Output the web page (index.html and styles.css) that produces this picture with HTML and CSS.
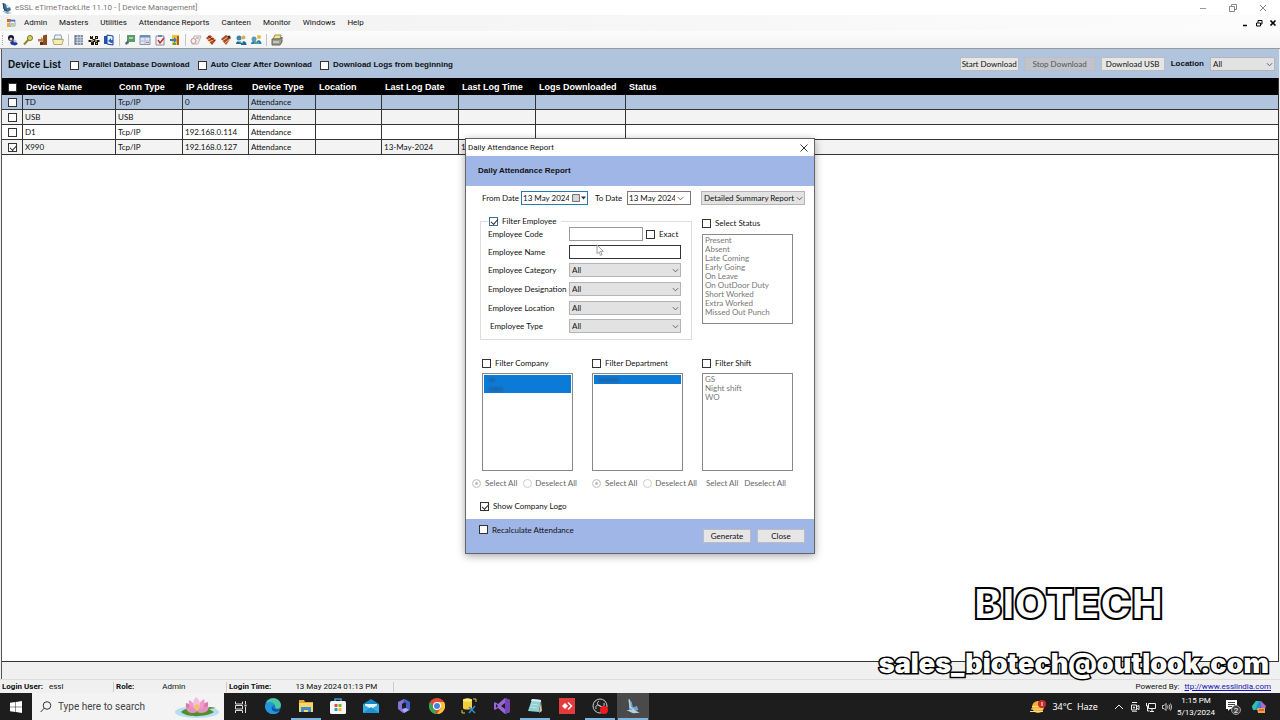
FILE: index.html
```html
<!DOCTYPE html>
<html lang="en">
<head>
<meta charset="utf-8">
<title>eSSL eTimeTrackLite 11.10 - [ Device Management]</title>
<link rel="stylesheet" href="styles.css">
</head>
<body>
<svg class="defs" aria-hidden="true">
  <symbol id="chev" viewBox="0 0 8 5"><path d="M1 1l3 3 3-3" fill="none" stroke="#555" stroke-width="1"/></symbol>
  <symbol id="essl" viewBox="0 0 12 12"><path d="M2 1l3 1 1 4 3-1 1 3-3 2-4-1z" fill="#3e7395"/><path d="M2 1l1 6 3 2" fill="none" stroke="#193b59"/><path d="M1 9l6 1 4 1-5 1z" fill="#8fa9bb"/><path d="M6 3l2 3" stroke="#9fcae5"/></symbol>
</svg>
<div class="app">
  <header class="titlebar">
    <svg class="ic12"><use href="#essl"/></svg>
    <span class="title">eSSL eTimeTrackLite 11.10 - [ Device Management]</span>
    <div class="wincontrols">
      <button aria-label="Minimize"><svg viewBox="0 0 8 8"><path d="M1 4.500h6" stroke="#999"/></svg></button>
      <button aria-label="Restore"><svg viewBox="0 0 8 8"><path d="M.5 2.500h5v5h-5zM2.500 2.500v-2h5v5h-2" fill="none" stroke="#888"/></svg></button>
      <button aria-label="Close"><svg viewBox="0 0 8 8"><path d="M1 1l6 6M7 1L1 7" stroke="#888"/></svg></button>
    </div>
  </header>
  <nav class="menubar">
    <svg class="formicon" viewBox="0 0 10 10"><path d="M1 5h4v4H1z" fill="#e2b33c"/><path d="M1 1h4v3H1z" fill="#d95c2b"/><path d="M4 2h5v6H4z" fill="#fff" stroke="#89a5cc"/><path d="M4 2h5v1.500H4z" fill="#3c6fc4"/><path d="M5 5h3v2H5z" fill="#e8be50"/></svg>
    <button>Admin</button><button>Masters</button><button>Utilities</button><button>Attendance Reports</button><button>Canteen</button><button>Monitor</button><button>Windows</button><button>Help</button>
    <div class="mdi">
      <button aria-label="Minimize child"><svg viewBox="0 0 8 8"><path d="M2 6.500h4" stroke="#000" stroke-width="1.500"/></svg></button>
      <button aria-label="Restore child"><svg viewBox="0 0 8 8"><path d="M1.500 4h4v3h-4zM3 3.500v-2h4v3.500h-1.500" fill="none" stroke="#000"/></svg></button>
      <button aria-label="Close child"><svg viewBox="0 0 8 8"><path d="M1.500 1.500l5 5M6.500 1.500l-5 5" stroke="#000" stroke-width="1.600"/></svg></button>
    </div>
  </nav>
  <div class="toolbar">
    <span class="grip"></span>
    <button aria-label="Users"><svg viewBox="0 0 12 12"><circle cx="4" cy="4" r="3" fill="#171733"/><circle cx="4" cy="5" r="1.500" fill="#e6d2bb"/><path d="M3 8l4-2 4 4-3 1.500-4-1z" fill="#24359c"/><circle cx="8" cy="7" r="1.500" fill="#b9c6e8"/></svg></button>
    <button aria-label="Key"><svg viewBox="0 0 12 12"><path d="M7 5L2 10.500" stroke="#8b8a20" stroke-width="2"/><circle cx="8" cy="4" r="2.500" fill="#d9d46a" stroke="#77761b"/></svg></button>
    <button aria-label="Exit"><svg viewBox="0 0 12 12"><path d="M6 1.500l4-1v10.500H6z" fill="#8d4a20"/><path d="M1 5h3V3l3 3-3 3V7.500H1z" fill="#bd7a42"/><path d="M3 8h3v3H3z" fill="#633014"/></svg></button>
    <button aria-label="Open"><svg viewBox="0 0 12 12"><path d="M2 5l1-4h6l1 4z" fill="#eef3f8" stroke="#87a0b9"/><path d="M.5 5.500h11L10 10.500H2z" fill="#f6edb0" stroke="#b1a973"/></svg></button>
    <span class="sep"></span>
    <button aria-label="Devices"><svg viewBox="0 0 12 12"><path d="M2 1h8v10H2z" fill="#8193a8"/><path d="M2 3.500h8M2 6h8M2 8.500h8" stroke="#e8eff5" stroke-width=".7"/><path d="M4.500 1v10M7.500 1v10" stroke="#c3cfda" stroke-width=".7"/><path d="M2 1v10" stroke="#53687e"/></svg></button>
    <button aria-label="Departments"><svg viewBox="0 0 12 12"><path d="M2 2h3v3H2zM7 2h3v3H7zM4.500 5h3v3h-3zM.5 6h3v2h-3zM8.500 6h3v2h-3zM3 8h3v3H3zM7 8h3v3H7z" fill="#1c1a0c"/><path d="M3 2h1v1H3zM8 3h1v1H8zM5 6h1v1H5zM8 9h1v1H8z" fill="#dcc52c"/></svg></button>
    <button aria-label="Import"><svg viewBox="0 0 12 12"><path d="M1 2h4v8H1z" fill="#2354a8"/><path d="M4 1l6 1v9l-6-1z" fill="#e8f1fb" stroke="#1a3e9b"/><path d="M5 7l3-3v2h2v3H8" fill="#2863c6"/></svg></button>
    <span class="sep"></span>
    <button aria-label="Chart"><svg viewBox="0 0 12 12"><path d="M3 1h8v7H3z" fill="#5c9a6c"/><path d="M5 3h4v2H5z" fill="#a5d3a7"/><path d="M1 9l3-3 1 3-3 2z" fill="#55676d"/></svg></button>
    <button aria-label="Table"><svg viewBox="0 0 12 12"><path d="M1 1.500h10v9H1z" fill="#dce6f5" stroke="#8395b2"/><path d="M1 1.500h10v2H1z" fill="#6b8abf"/><path d="M1 7h10M6 4v6" stroke="#b0bed1"/><path d="M7 8h3v1H7z" fill="#d57b6b"/></svg></button>
    <button aria-label="Tasks"><svg viewBox="0 0 12 12"><path d="M2 2h8v9H2z" fill="#f4f4f8" stroke="#8a8da0"/><path d="M4 1h4v2H4z" fill="#7584a0"/><path d="M4 6l2 3 4-5" fill="none" stroke="#c0302c" stroke-width="1.500"/></svg></button>
    <button aria-label="Export"><svg viewBox="0 0 12 12"><path d="M3 1h7v10H3z" fill="#f3c32f"/><path d="M1 5h4V3l3 3-3 3V7H1z" fill="#3879bd"/><path d="M8 2h2v9H8z" fill="#b85b20"/><path d="M4 9h3v2H4z" fill="#56a04d"/></svg></button>
    <span class="sep"></span>
    <button aria-label="Log"><svg viewBox="0 0 12 12"><path d="M4 2h7L8 10H2z" fill="#ecebee" stroke="#b9b7c0"/><circle cx="3.500" cy="7" r="2.500" fill="#f7f2f2" stroke="#c98a88"/><path d="M6 4h3" stroke="#d68989"/></svg></button>
    <button aria-label="Report"><svg viewBox="0 0 12 12"><path d="M1 4l4-3 6 5-4 5z" fill="#b3412b"/><path d="M2 6l6-3M4 8l6-3" stroke="#f3cf72"/><path d="M3 2l7 5" stroke="#722113"/></svg></button>
    <button aria-label="Edit report"><svg viewBox="0 0 12 12"><path d="M1 5l5-4 5 3-5 7z" fill="#a9472c"/><path d="M2 7l6-4M5 9l5-4" stroke="#efc76c"/><circle cx="9" cy="3" r="1.500" fill="#473027"/></svg></button>
    <button aria-label="Sync users"><svg viewBox="0 0 12 12"><circle cx="4" cy="4" r="2.500" fill="#3b83b0"/><circle cx="8.500" cy="3.500" r="2" fill="#d6b34d"/><path d="M1 10c0-4 6-4 6 0zM6 11c0-5 5.500-5 5.500 0z" fill="#1b6893"/><path d="M3 7l5 2" stroke="#a0d1dc"/></svg></button>
    <button aria-label="Sync groups"><svg viewBox="0 0 12 12"><circle cx="4" cy="5" r="2.500" fill="#5c9ab6"/><circle cx="9" cy="3" r="2" fill="#e5bb3f"/><path d="M1 10c0-4 6-4 6 0zM6 10c0-5 5.500-5 5.500 0z" fill="#2a7fae"/><path d="M4 9h5" stroke="#7ac277"/></svg></button>
    <span class="sep"></span>
    <button aria-label="Print"><svg viewBox="0 0 12 12"><path d="M4 1h6l-1 4H2z" fill="#f4e58f" stroke="#a08e55"/><path d="M1 5h8l2-2v5l-2 3H1z" fill="#9a9a92" stroke="#65655f"/><path d="M2 8h6" stroke="#eee"/></svg></button>
  </div>

  <main class="client">
    <form class="devicebar">
      <h1>Device List</h1>
      <label><input type="checkbox">Parallel Database Download</label>
      <label><input type="checkbox">Auto Clear After Download</label>
      <label><input type="checkbox">Download Logs from beginning</label>
      <div class="deviceactions">
        <button type="button" class="btn start">Start Download</button>
        <button type="button" class="btn stop" disabled>Stop Download</button>
        <button type="button" class="btn usb">Download USB</button>
        <label class="loc" for="loc">Location</label>
        <span class="combo locbox"><select id="loc"><option>All</option></select><svg><use href="#chev"/></svg></span>
      </div>
    </form>
    <div class="gridwrap">
      <table class="devices">
        <colgroup><col class="c1"><col class="c2"><col class="c3"><col class="c4"><col class="c3"><col class="c4"><col class="c7"><col class="c7"><col class="c9"><col></colgroup>
        <thead><tr><th><input type="checkbox" aria-label="Select all devices"></th><th>Device Name</th><th>Conn Type</th><th>IP Address</th><th>Device Type</th><th>Location</th><th>Last Log Date</th><th>Last Log Time</th><th>Logs Downloaded</th><th>Status</th></tr></thead>
        <tbody>
          <tr class="current"><td><input type="checkbox" aria-label="TD"></td><td>TD</td><td>Tcp/IP</td><td>0</td><td>Attendance</td><td></td><td></td><td></td><td></td><td></td></tr>
          <tr class="alt"><td><input type="checkbox" aria-label="USB"></td><td>USB</td><td>USB</td><td></td><td>Attendance</td><td></td><td></td><td></td><td></td><td></td></tr>
          <tr><td><input type="checkbox" aria-label="D1"></td><td>D1</td><td>Tcp/IP</td><td>192.168.0.114</td><td>Attendance</td><td></td><td></td><td></td><td></td><td></td></tr>
          <tr class="alt"><td><input type="checkbox" aria-label="X990" checked></td><td>X990</td><td>Tcp/IP</td><td>192.168.0.127</td><td>Attendance</td><td></td><td>13-May-2024</td><td>1</td><td></td><td></td></tr>
        </tbody>
      </table>
    </div>
  </main>

  <footer class="status">
    <div class="s1"><b>Login User:</b><span>essl</span></div>
    <div class="s2"><b>Role:</b><span>Admin</span></div>
    <div class="s3"><b>Login Time:</b><span>13 May 2024 01:13 PM</span></div>
    <div class="powered"><span>Powered By:</span><a href="#">ttp://www.esslindia.com</a></div>
  </footer>

  <div class="taskbar">
    <button class="startbtn" aria-label="Start"><svg viewBox="0 0 12 12"><path d="M0 1.700L5.500 1v4.700H0zM6 .9L12 0v5.700H6zM0 6.200h5.500V11L0 10.300zM6 6.200h6V12l-6-.9z" fill="#fff"/></svg></button>
    <label class="search">
      <svg class="mag" viewBox="0 0 12 12"><circle cx="7" cy="4.500" r="3.800" fill="none" stroke="#333"/><path d="M4.200 7.200L.7 11" stroke="#333"/></svg>
      <input type="text" placeholder="Type here to search" aria-label="Search">
      <svg class="lotus" viewBox="0 0 46 22"><ellipse cx="23" cy="16" rx="22" ry="6" fill="#b8dcf0"/><path d="M7 16c5-5 10-3 15-3 7-2 14-3 20-1l-7 1 5 3c-7 5-27 6-33 0z" fill="#4f8f2c"/><path d="M12 7c5 1 8 4 9 9-7 1-10-3-9-9zM34 6c-5 1-9 4-10 9 7 2 11-2 10-9z" fill="#db78b0"/><path d="M15 4c4 2 7 6 8 11-6-1-9-5-8-11zM30 3c-4 2-6 7-7 12 6-1 9-6 7-12z" fill="#ed9bc8"/><path d="M22 1c5 4 5 9 1 14-5-4-5-10-1-14z" fill="#f6bddb"/><path d="M12 12c5-2 9 0 11 4-5 2-10 1-11-4zM35 11c-5-1-9 1-12 5 5 2 11 1 12-5z" fill="#e891bf"/><circle cx="23" cy="11" r="2.500" fill="#f1c35a"/></svg>
    </label>
    <button class="taskview" aria-label="Task view"><svg viewBox="0 0 12 12"><path d="M.5.5v2.500h7V.5M.5 4.500h7v3.500h-7zM.5 12V9.500h7V12M10.500 0v3M10.500 6v6" fill="none" stroke="#ddd"/><path d="M9.500 3.500h2v2h-2z" fill="#ddd"/></svg></button>
    <div class="apps">
      <button aria-label="Edge"><svg viewBox="0 0 16 16"><circle cx="8" cy="8" r="8" fill="#1673c5"/><path d="M1 5C4-2 15-1 16 7c0 4-5 5-6 2 1-3-4-5-9-4z" fill="#4ac8a0"/><path d="M0 8c1-5 9-5 9-1-3 1-3 6 2 7 2 0 3-1 4-1-5 6-15 3-15-5z" fill="#2496dc"/><path d="M7 8c0 3 4 5 8 3-2 4-10 3-8-3z" fill="#124b8c"/></svg></button>
      <button class="open" aria-label="File Explorer"><svg viewBox="0 0 16 16"><path d="M1 2h5l1 2h8v10H1z" fill="#e0a82d"/><path d="M1 5h14v9H1z" fill="#fbd66c"/><path d="M3 9h10v5h-3v-2H6v2H3z" fill="#3d91c9"/></svg></button>
      <button aria-label="Store"><svg viewBox="0 0 16 16"><path d="M5 4V1h6v3" fill="none" stroke="#36a0dc" stroke-width="1.500"/><rect y="3" width="16" height="13" rx="1.500" fill="#f5f5f5"/><path d="M4.500 6h3v3h-3z" fill="#e64b2c"/><path d="M8.500 6h3v3h-3z" fill="#78b82b"/><path d="M4.500 10h3v3h-3z" fill="#269bd6"/><path d="M8.500 10h3v3h-3z" fill="#f4b624"/></svg></button>
      <button aria-label="Mail"><svg viewBox="0 0 16 16"><path d="M0 6l8-5 8 5v9H0z" fill="#1686c7"/><path d="M2 6h12v5H2z" fill="#e4f4fc"/><path d="M0 6l8 5 8-5v9H0z" fill="#37aee8"/><path d="M0 15l8-6 8 6z" fill="#1b92d4"/></svg></button>
      <button aria-label="Microsoft 365"><svg viewBox="0 0 16 16"><path d="M8 1L2 4v7l5 4 3-2-4-2V6l4-3z" fill="#8573db"/><path d="M9 1l5 3v8l-6 3-2-4 4-1V5L7 4z" fill="#3e63c8"/><path d="M6 11l4-1 3 2-5 3z" fill="#b7a4ef"/></svg></button>
      <button aria-label="Chrome"><svg viewBox="0 0 16 16"><circle cx="8" cy="8" r="8" fill="#e34a36"/><path d="M1 4l4 6 3 6A8 8 0 0 1 1 4z" fill="#35a852"/><path d="M8 4h7a8 8 0 0 1-7 12l4-6z" fill="#fac533"/><circle cx="8" cy="8" r="4" fill="#fff"/><circle cx="8" cy="8" r="3" fill="#4084e8"/></svg></button>
      <button aria-label="SQL tools"><svg viewBox="0 0 16 16"><path d="M2 2c0-2 9-2 9 0v8c0 2-9 2-9 0z" fill="#f3cf39"/><ellipse cx="6.500" cy="2" rx="4.500" ry="1.500" fill="#faea85"/><path d="M8 9l6 6M14 8l-6 7" stroke="#3189d3" stroke-width="1.500"/><path d="M12 1h3v3M1 12v3h3" fill="none" stroke="#d9d037"/></svg></button>
      <button aria-label="Visual Studio"><svg viewBox="0 0 16 16"><path d="M11 0l5 2v12l-5 2-7-6-3 2-1-1V5l1-1 3 2zM11 5L7 8l4 3zM2 6v4l2-2z" fill="#9966d8" fill-rule="evenodd"/><path d="M11 0l5 2v12l-5 2z" fill="#7545b6"/></svg></button>
      <button class="open" aria-label="Notepad"><svg viewBox="0 0 16 16"><path d="M5 1l9 1-2 12-11-1z" fill="#8cd0d1"/><path d="M5 1l9 1v2L4 3z" fill="#e3eced"/><path d="M14 3l1 10-3 2z" fill="#d0c89f"/><path d="M4 6l7 1M3 9l7 1" stroke="#bfe8e4"/></svg></button>
      <button aria-label="AnyDesk"><svg viewBox="0 0 16 16"><path d="M0 0h16v16H0z" fill="#e33b3d"/><path d="M6 5l3 3-3 3-3-3z" fill="#fff"/><path d="M8.500 5l1-1 4 4-4 4-1-1 3-3z" fill="#fff"/></svg></button>
      <button class="open" aria-label="OBS"><svg viewBox="0 0 16 16"><circle cx="8" cy="8" r="7" fill="#222" stroke="#ccc"/><path d="M7 3c-3 2-1 5 1 5s3 4 0 5M4 11c-1-4 2-5 4-3s5 0 4-3" fill="none" stroke="#ccc"/><circle cx="12" cy="12" r="4" fill="#ee1c20"/></svg></button>
      <button class="open active" aria-label="eTimeTrackLite"><svg viewBox="0 0 12 12"><path d="M3 1l2 2 1 4 3-1 1 3-3 1-4-1z" fill="#6da6cf"/><path d="M3 1l1 6 3 2" fill="none" stroke="#b9d7eb"/><path d="M1 9l6 0 4 2-5 .5z" fill="#c2ced6"/></svg></button>
    </div>
    <div class="tray">
      <svg class="weather" viewBox="0 0 16 14"><circle cx="8" cy="7" r="6" fill="#f2b12e"/><path d="M1 9h12M0 11.500h13M2 6.500h10" stroke="#f8d98e"/><circle cx="12" cy="4" r="4" fill="#c92b28"/><path d="M12 2v4" stroke="#fff"/></svg>
      <span class="temp">34°C&nbsp; Haze</span>
      <svg class="t1" viewBox="0 0 10 10"><path d="M1 7l4-4 4 4" fill="none" stroke="#eee"/></svg>
      <svg class="t1" viewBox="0 0 10 10"><path d="M1.500 3h5v5h-5zM7 4.500l2-1v4l-2-1M2 .5h5M2 9.800h5" fill="none" stroke="#eee"/><circle cx="4" cy="5.500" r="1" fill="#eee"/></svg>
      <svg class="t1" viewBox="0 0 10 10"><path d="M2.500 1.500h7v5h-7zM6 7v2M4 9.500h4M.5 1v3h2M1.500 4v5h2" fill="none" stroke="#eee"/></svg>
      <svg class="t1" viewBox="0 0 10 10"><path d="M.5 3.500h1.500l2-2v7l-2-2H.5zM5.500 3.500q1 1.500 0 3M7 2.500q2 2.500 0 5M8.500 1.500q2.500 3.500 0 7" fill="none" stroke="#eee" stroke-width=".8"/></svg>
      <div class="clock"><div>1:15 PM</div><div>5/13/2024</div></div>
      <svg class="note" viewBox="0 0 16 16"><path d="M1 1h11v9H5l-2 2v-2H1z" fill="#fff"/><path d="M3 3.500h7M3 5.500h7M3 7.500h4" stroke="#444"/><circle cx="11" cy="11" r="4.500" fill="#444" stroke="#999"/><text x="11" y="14" text-anchor="middle">2</text></svg>
      <svg class="copilot" viewBox="0 0 14 14"><path d="M4 1h5l1 4-3 5H2L0 7z" fill="#268fd1"/><path d="M4 1h3L3 10H1L0 6z" fill="#32c0ae"/><path d="M9 1l5 5-2 6H6l3-5z" fill="#b768cf"/><path d="M5 8h8v5H6z" fill="#f3a145"/><path d="M7 10h5" stroke="#a4322b"/></svg>
    </div>
  </div>
</div>

<section class="dialog" role="dialog" aria-labelledby="dlgtitle">
  <header class="dlgbar"><span id="dlgtitle">Daily Attendance Report</span><button aria-label="Close dialog"><svg viewBox="0 0 8 8"><path d="M.5.5l7 7M7.500.5l-7 7" stroke="#333"/></svg></button></header>
  <h2>Daily Attendance Report</h2>
  <form class="dlgbody">
    <div class="dates">
      <label for="from">From Date</label>
      <span class="date focus"><input id="from" type="text" value="13 May 2024"><svg class="cal" viewBox="0 0 14 8"><path d="M.5.5h7v7h-7z" fill="#ccc" stroke="#777"/><path d="M1 3h6M1 5h6M3 1v6M5 1v6" stroke="#eee" stroke-width=".5"/><path d="M9 2.500h5l-2.500 3z" fill="#333"/></svg></span>
      <label for="to" class="to">To Date</label>
      <span class="date todate"><input id="to" type="text" value="13 May 2024"><svg class="dchev"><use href="#chev"/></svg></span>
      <span class="combo report"><select aria-label="Report type"><option>Detailed Summary Report</option></select><svg><use href="#chev"/></svg></span>
    </div>
    <div class="middle">
      <fieldset>
        <legend><label><input type="checkbox" class="blue" checked>Filter Employee</label></legend>
        <div class="fields">
          <label for="code">Employee Code</label><span class="coderow"><input id="code" type="text"><label><input type="checkbox">Exact</label></span>
          <label for="name">Employee Name</label><input id="name" class="dark" type="text">
          <label for="cat">Employee Category</label><span class="combo"><select id="cat"><option>All</option></select><svg><use href="#chev"/></svg></span>
          <label for="des">Employee Designation</label><span class="combo"><select id="des"><option>All</option></select><svg><use href="#chev"/></svg></span>
          <label for="eloc">Employee Location</label><span class="combo"><select id="eloc"><option>All</option></select><svg><use href="#chev"/></svg></span>
          <label for="type" class="inset">Employee Type</label><span class="combo"><select id="type"><option>All</option></select><svg><use href="#chev"/></svg></span>
        </div>
      </fieldset>
      <div class="statuscol">
        <label><input type="checkbox">Select Status</label>
        <ul class="list"><li>Present</li><li>Absent</li><li>Late Coming</li><li>Early Going</li><li>On Leave</li><li>On OutDoor Duty</li><li>Short Worked</li><li>Extra Worked</li><li>Missed Out Punch</li></ul>
      </div>
    </div>
    <div class="filters">
      <div>
        <label><input type="checkbox">Filter Company</label>
        <ul class="list"><li class="sel"><i class="short"></i></li><li class="sel"><i></i></li></ul>
        <div class="radios first"><label><input type="radio" name="co" checked disabled>Select All</label><label><input type="radio" name="co" disabled>Deselect All</label></div>
      </div>
      <div>
        <label><input type="checkbox">Filter Department</label>
        <ul class="list"><li class="sel"><i class="long"></i></li></ul>
        <div class="radios"><label><input type="radio" name="dep" checked disabled>Select All</label><label><input type="radio" name="dep" disabled>Deselect All</label></div>
      </div>
      <div>
        <label><input type="checkbox">Filter Shift</label>
        <ul class="list"><li>GS</li><li>Night shift</li><li>WO</li></ul>
        <div class="radios plain"><button type="button">Select All</button><button type="button">Deselect All</button></div>
      </div>
    </div>
    <label class="logo"><input type="checkbox" checked>Show Company Logo</label>
    <div class="dlgfoot">
      <label><input type="checkbox">Recalculate Attendance</label>
      <button type="button" class="btn">Generate</button>
      <button type="button" class="btn">Close</button>
    </div>
  </form>
</section>
<svg class="cursor" viewBox="0 0 8 12"><path d="M1 .8v9l2-2 1.500 3.500 1.500-.7L4.500 7.300H7.300z" fill="#fff" stroke="#888" stroke-width=".8"/></svg>
<div class="brand">BIOTECH</div>
<div class="brand mailmark">sales_biotech@outlook.com</div>
</body>
</html>
```
FILE: styles.css
```css
* { box-sizing: border-box; }
body {
  margin: 0;
  overflow: hidden;
  color: #111;
  font: 8px/10px Lato, sans-serif;
  background: #f0f0f0;
}
button, input, select { font: inherit; color: inherit; margin: 0; padding: 0; }
button { border: 0; background: none; white-space: nowrap; }
svg { display: block; flex: none; }
.defs { display: none; }
label { display: flex; align-items: center; white-space: nowrap; }

input[type="checkbox"] {
  appearance: none;
  flex: none;
  width: 9px;
  height: 9px;
  border: 1px solid #333;
  background: #fff;
  position: relative;
}
input[type="checkbox"]:checked::after {
  content: "";
  position: absolute;
  left: 1px;
  top: 1px;
  width: 6px;
  height: 3px;
  border: solid #333;
  border-width: 0 0 1px 1px;
  transform: rotate(-48deg);
}
input.blue { border-color: #3c6f9c; }
input[type="radio"] {
  appearance: none;
  flex: none;
  width: 9px;
  height: 9px;
  border: 1px solid #ccc;
  border-radius: 50%;
  background: #fff;
}
input[type="radio"]:checked {
  background: #bbb;
  box-shadow: inset 0 0 0 2px #fff;
}
.btn {
  height: 14px;
  border: 1px solid #bcbcbc;
  background: #e6e6e6;
  line-height: 10px;
}
.combo { position: relative; display: block; }
.combo select {
  appearance: none;
  display: block;
  width: 100%;
  height: 14px;
  padding: 0 2px;
  border: 1px solid #b5b5b5;
  border-radius: 0;
  background: #e2e2e2;
}
.combo svg {
  position: absolute;
  right: 2px;
  top: 5px;
  width: 7px;
  height: 5px;
  pointer-events: none;
}

.app { display: flex; flex-direction: column; height: 100vh; }
.titlebar, .menubar, .status { font-family: Roboto, sans-serif; }
.titlebar {
  display: flex;
  align-items: center;
  height: 15px;
  padding: 0 13px 0 1px;
  background: #fff;
  color: #777;
}
.ic12 { width: 12px; height: 12px; }
.title { margin-left: 2px; }
.wincontrols { display: flex; gap: 22px; margin-left: auto; }
.wincontrols svg, .mdi svg { width: 8px; height: 8px; }
.menubar {
  display: flex;
  align-items: center;
  gap: 12px;
  height: 16px;
  padding: 0 3px 0 6px;
  background: linear-gradient(90deg, #f1f1f1, #fcfcfc);
}
.formicon { width: 10px; height: 10px; margin-right: -4px; }
.mdi { display: flex; gap: 6px; margin-left: auto; }
.toolbar {
  display: flex;
  align-items: center;
  height: 18px;
  padding-left: 2px;
  background: linear-gradient(#fcfcfc, #f3f3f3);
  border-bottom: 1px solid #999;
}
.toolbar button { width: 15px; display: flex; justify-content: center; }
.toolbar svg { width: 12px; height: 12px; }
.grip { width: 3px; height: 10px; border-left: 1px dotted #aaa; }
.sep { width: 6px; height: 12px; background: linear-gradient(90deg, transparent 3px, #c4c4c4 3px, #c4c4c4 4px, transparent 4px); }

.client {
  flex: 1;
  display: flex;
  flex-direction: column;
  margin: 0 1px;
  border-left: 1px solid #555;
}
.devicebar {
  display: flex;
  align-items: center;
  height: 29px;
  padding: 3px 4px 0 6px;
  background: #b0c4de;
  font: bold 8px/10px "Liberation Sans", sans-serif;
}
.devicebar h1 { margin: 0 9px 0 0; font-size: 10px; line-height: 12px; font-weight: bold; white-space: nowrap; }
.devicebar > label { gap: 4px; margin-right: 8px; }
.deviceactions {
  display: flex;
  align-items: center;
  margin: -3px 0 0 auto;
  font: 8px/10px Lato, sans-serif;
}
.start { width: 59px; }
.stop { width: 72px; margin: 0 5px; background: #c1c5cb; border-color: #b8bfc8; color: #555; }
.usb { width: 64px; }
.loc { margin: 0 6px; font: bold 8px/10px "Liberation Sans", sans-serif; }
.locbox { width: 65px; }
.gridwrap {
  flex: 1;
  margin-bottom: 17px;
  border-right: 1px solid #333;
  border-bottom: 1px solid #333;
  background: #fff;
}
.devices { width: 100%; border-collapse: separate; border-spacing: 0; table-layout: fixed; }
.c1 { width: 21px; }
.c2 { width: 93px; }
.c3 { width: 67px; }
.c4 { width: 66px; }
.c7 { width: 77px; }
.c9 { width: 90px; }
.devices th {
  height: 17px;
  padding: 1px 0 0 3px;
  background: #000;
  color: #fff;
  font: bold 9px/10px "Liberation Sans", sans-serif;
  text-align: left;
  white-space: nowrap;
}
.devices td {
  height: 15px;
  padding: 0 0 0 2px;
  border-right: 1px solid #333;
  border-bottom: 1px solid #333;
  white-space: nowrap;
}
.devices td:last-child { border-right: 0; }
.devices th:first-child, .devices td:first-child { padding-left: 6px; }
.devices input { display: block; }
.current td { background: #b0c4de; }
.alt td { background: #f3f3f3; }

.status {
  display: flex;
  align-items: center;
  height: 14px;
  border-top: 1px solid #ddd;
}
.status > div { display: flex; padding-left: 2px; white-space: nowrap; }
.status .s1, .status .s2, .status .s3 { border-right: 1px solid #ccc; }
.s1 { width: 114px; gap: 6px; }
.s2 { width: 113px; gap: 28px; }
.s3 { width: 167px; gap: 24px; }
.powered { gap: 5px; margin-left: auto; padding-right: 9px; }
.powered a { color: #1414b8; }

.taskbar { display: flex; height: 27px; background: #1d1d1d; color: #fff; }
.taskbar button { display: flex; align-items: center; justify-content: center; }
.startbtn { width: 32px; }
.startbtn svg, .taskview svg { width: 12px; height: 12px; }
.search { width: 192px; padding: 0 4px 0 8px; gap: 6px; background: #f3f3f3; color: #333; font-family: Roboto, sans-serif; font-size: 10px; }
.search input { flex: 1; min-width: 0; height: 20px; border: 0; outline: 0; background: none; }
.search input::placeholder { color: #444; opacity: 1; }
.mag { width: 12px; height: 12px; }
.lotus { width: 46px; height: 22px; }
.taskview { width: 33px; }
.apps { display: flex; justify-content: space-between; width: 392px; }
.apps button { width: 32px; border-bottom: 2px solid transparent; }
.apps svg { width: 16px; height: 16px; }
.apps .open { border-image: linear-gradient(90deg, transparent 3px, #7db5df 3px, #7db5df 29px, transparent 29px) 2; border-width: 0 0 2px; border-style: solid; }
.apps .active { background: #4a4a4a; }
.tray { display: flex; align-items: center; margin-left: auto; padding-right: 14px; }
.weather { width: 16px; height: 14px; margin-right: 6px; }
.temp { font-family: "Noto Sans", sans-serif; font-size: 9px; white-space: nowrap; margin-right: 13px; }
.t1 { width: 10px; height: 10px; margin: 0 3px; }
.clock { margin: 0 10px 0 2px; text-align: center; font: 8px/12px Roboto, sans-serif; }
.note { width: 16px; height: 16px; margin-right: 11px; }
.note text { font: 8px Roboto, sans-serif; fill: #fff; }
.copilot { width: 14px; height: 14px; }

.dialog {
  position: absolute;
  left: 465px;
  top: 138px;
  width: 350px;
  border: 1px solid #666;
  background: #fff;
  box-shadow: 0 2px 8px rgba(0, 0, 0, .35);
}
.dlgbar { display: flex; align-items: center; justify-content: space-between; height: 17px; padding: 0 6px 0 2px; font: 8px/10px Roboto, sans-serif; }
.dlgbar svg { width: 8px; height: 8px; }
.dialog h2 { margin: 0; height: 30px; padding: 0 12px; background: #a0b6e6; font: bold 8px/29px "Liberation Sans", sans-serif; }
.dates { display: flex; align-items: center; padding: 5px 9px 0 16px; }
.dates > label { width: 39px; }
.date { display: flex; align-items: center; width: 67px; height: 14px; border: 1px solid #777; }
.date input { width: 46px; margin-left: 1px; border: 0; outline: 0; background: none; }
.focus { border-color: #2879ad; }
.cal { width: 14px; height: 8px; margin-left: 3px; }
.dchev { width: 7px; height: 5px; margin-left: 2px; }
.dates .to { width: 32px; margin-left: 7px; }
.todate { width: 64px; }
.report { width: 104px; margin-left: auto; }
.middle { display: flex; gap: 10px; padding: 11px 14px 0; }
fieldset { flex: none; width: 212px; min-width: 0; margin: 0; padding: 0 10px 6px 7px; border: 1px solid #ddd; }
legend { padding: 0 4px 0 1px; height: 10px; }
legend label, .middle label:has(input), .filters label, .logo, .dlgfoot label { gap: 4px; }
.fields { display: grid; grid-template-columns: 81px minmax(0, 1fr); grid-template-rows: 18px 18px 19px 19px 18px 14px; align-items: start; margin-top: 1px; }
.fields > label { height: 14px; }
.fields .inset { padding-left: 2px; }
.fields input[type="text"] { width: 100%; height: 14px; border: 1px solid #999; background: #fff; }
.fields input.dark { border-color: #333; }
.coderow { display: flex; gap: 3px; }
.fields .coderow input[type="text"] { width: 74px; }
.statuscol { padding-top: 2px; }
.list {
  width: 91px;
  margin: 0;
  padding: 1px;
  border: 1px solid #888;
  list-style: none;
  line-height: 9px;
  color: #777;
}
.list li { height: 9px; padding-left: 1px; white-space: nowrap; }
.statuscol .list { height: 90px; margin-top: 6px; }
.list .sel { background: #0b7bd7; padding: 3px 0 0 5px; }
.sel i { display: block; width: 14px; height: 4px; background: #245f9c; filter: blur(1px); opacity: .7; }
.sel .short { width: 6px; }
.sel .long { width: 20px; }
.filters { display: flex; gap: 19px; padding: 18px 16px 0; }
.filters > div { width: 91px; }
.filters .list { height: 98px; margin-top: 5px; }
.radios { display: flex; gap: 6px; margin-top: 7px; color: #666; }
.radios.first { margin-left: -10px; }
.radios label:last-child { gap: 3px; }
.radios.plain { padding-left: 4px; }
.logo { margin: 13px 0 0 14px; height: 10px; }
.dlgfoot { display: flex; gap: 6px; height: 34px; margin-top: 8px; padding: 10px 9px; background: #a0b6e6; }
.dlgfoot label { height: 1px; margin: 0 auto 0 4px; }
.dlgfoot .btn { width: 48px; }

.cursor { position: absolute; left: 596px; top: 244px; width: 8px; height: 12px; }
.brand {
  position: absolute;
  right: 117px;
  bottom: 89px;
  font: 900 42px/54px Inter, sans-serif;
  color: #fff;
  -webkit-text-stroke: 2px #000;
  white-space: nowrap;
}
.mailmark { right: 11px; bottom: 38px; font-size: 27px; line-height: 36px; -webkit-text-stroke: 3px #000; paint-order: stroke fill; }
```
